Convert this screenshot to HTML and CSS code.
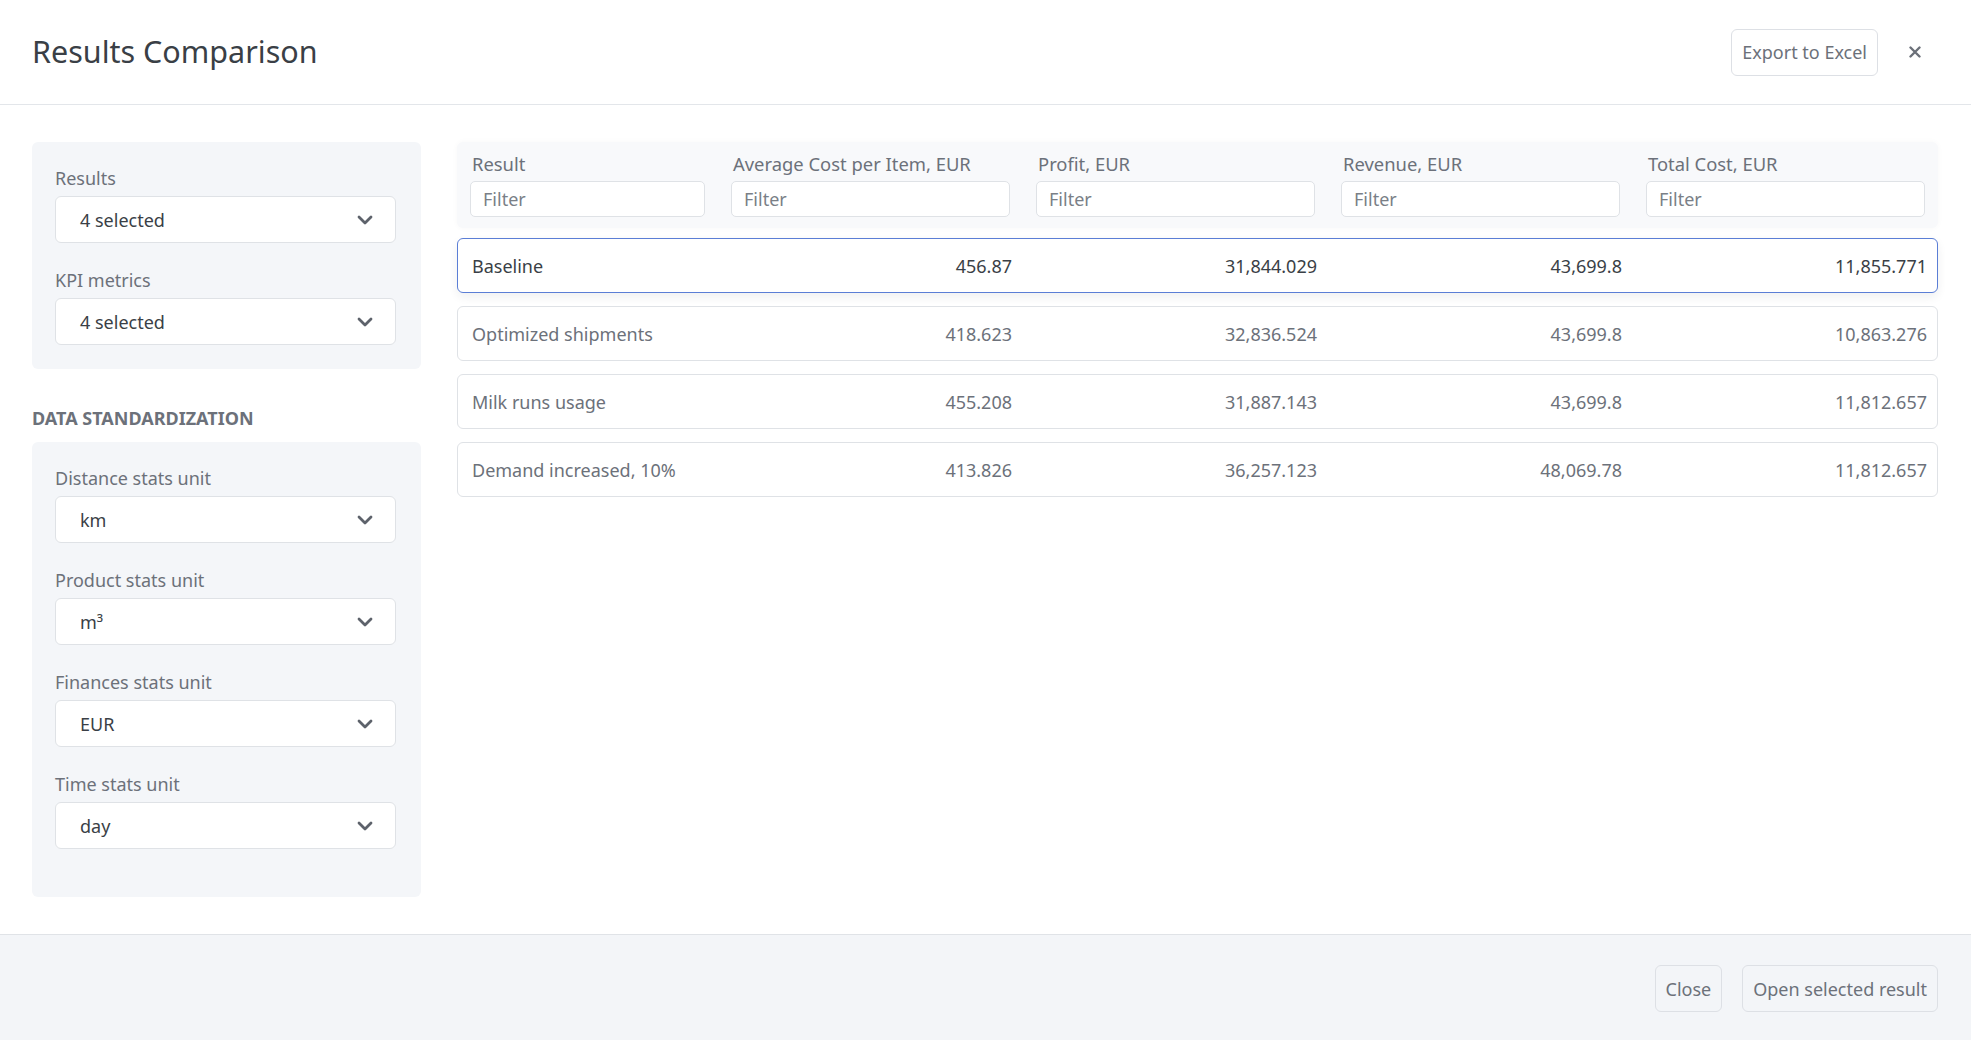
FILE: index.html
```html
<!DOCTYPE html>
<html lang="en">
<head>
<meta charset="utf-8">
<title>Results Comparison</title>
<link rel="stylesheet" href="styles.css">
</head>
<body>
<div class="modal">
  <header class="modal-header">
    <h1 class="title">Results Comparison</h1>
    <div class="header-actions">
      <button class="btn">Export to Excel</button>
      <button class="close-btn" aria-label="Close">
        <svg width="12" height="12" viewBox="0 0 12 12"><path d="M1.5 1.5 L10.5 10.5 M10.5 1.5 L1.5 10.5" stroke="#6b7079" stroke-width="2.4" stroke-linecap="round"/></svg>
      </button>
    </div>
  </header>

  <main class="modal-body">
    <aside class="sidebar">
      <section class="panel">
        <div class="field">
          <label class="field-label">Results</label>
          <div class="select"><span>4 selected</span><svg class="chev" width="16" height="10" viewBox="0 0 16 10"><path d="M2 2 L8 8 L14 2" fill="none" stroke="#5d626b" stroke-width="2.8" stroke-linecap="round" stroke-linejoin="round"/></svg></div>
        </div>
        <div class="field">
          <label class="field-label">KPI metrics</label>
          <div class="select"><span>4 selected</span><svg class="chev" width="16" height="10" viewBox="0 0 16 10"><path d="M2 2 L8 8 L14 2" fill="none" stroke="#5d626b" stroke-width="2.8" stroke-linecap="round" stroke-linejoin="round"/></svg></div>
        </div>
      </section>

      <h2 class="section-title">DATA STANDARDIZATION</h2>

      <section class="panel panel-tall">
        <div class="field">
          <label class="field-label">Distance stats unit</label>
          <div class="select"><span>km</span><svg class="chev" width="16" height="10" viewBox="0 0 16 10"><path d="M2 2 L8 8 L14 2" fill="none" stroke="#5d626b" stroke-width="2.8" stroke-linecap="round" stroke-linejoin="round"/></svg></div>
        </div>
        <div class="field">
          <label class="field-label">Product stats unit</label>
          <div class="select"><span>m³</span><svg class="chev" width="16" height="10" viewBox="0 0 16 10"><path d="M2 2 L8 8 L14 2" fill="none" stroke="#5d626b" stroke-width="2.8" stroke-linecap="round" stroke-linejoin="round"/></svg></div>
        </div>
        <div class="field">
          <label class="field-label">Finances stats unit</label>
          <div class="select"><span>EUR</span><svg class="chev" width="16" height="10" viewBox="0 0 16 10"><path d="M2 2 L8 8 L14 2" fill="none" stroke="#5d626b" stroke-width="2.8" stroke-linecap="round" stroke-linejoin="round"/></svg></div>
        </div>
        <div class="field">
          <label class="field-label">Time stats unit</label>
          <div class="select"><span>day</span><svg class="chev" width="16" height="10" viewBox="0 0 16 10"><path d="M2 2 L8 8 L14 2" fill="none" stroke="#5d626b" stroke-width="2.8" stroke-linecap="round" stroke-linejoin="round"/></svg></div>
        </div>
      </section>
    </aside>

    <section class="results">
      <div class="table-head grid">
        <div class="col-head"><span class="col-title">Result</span><input class="filter" placeholder="Filter"></div>
        <div class="col-head"><span class="col-title">Average Cost per Item, EUR</span><input class="filter" placeholder="Filter"></div>
        <div class="col-head"><span class="col-title">Profit, EUR</span><input class="filter" placeholder="Filter"></div>
        <div class="col-head"><span class="col-title">Revenue, EUR</span><input class="filter" placeholder="Filter"></div>
        <div class="col-head"><span class="col-title">Total Cost, EUR</span><input class="filter" placeholder="Filter"></div>
      </div>

      <div class="rows">
        <div class="row grid selected">
          <span>Baseline</span><span class="num">456.87</span><span class="num">31,844.029</span><span class="num">43,699.8</span><span class="num">11,855.771</span>
        </div>
        <div class="row grid">
          <span>Optimized shipments</span><span class="num">418.623</span><span class="num">32,836.524</span><span class="num">43,699.8</span><span class="num">10,863.276</span>
        </div>
        <div class="row grid">
          <span>Milk runs usage</span><span class="num">455.208</span><span class="num">31,887.143</span><span class="num">43,699.8</span><span class="num">11,812.657</span>
        </div>
        <div class="row grid">
          <span>Demand increased, 10%</span><span class="num">413.826</span><span class="num">36,257.123</span><span class="num">48,069.78</span><span class="num">11,812.657</span>
        </div>
      </div>
    </section>
  </main>

  <footer class="modal-footer">
    <button class="btn btn-footer">Close</button>
    <button class="btn btn-footer">Open selected result</button>
  </footer>
</div>
</body>
</html>
```

FILE: styles.css
```css
* { box-sizing: border-box; }

html, body {
  margin: 0;
  padding: 0;
  background: #ffffff;
}

body {
  font-family: "Noto Sans", "Open Sans", sans-serif;
  color: #3a3f46;
}

.modal {
  width: 1971px;
  height: 1040px;
  display: flex;
  flex-direction: column;
}

/* Header */
.modal-header {
  height: 105px;
  flex: 0 0 105px;
  border-bottom: 1px solid #e3e6ea;
  display: flex;
  align-items: center;
  justify-content: space-between;
  padding: 0 36px 3px 32px;
}

.title {
  margin: 0;
  font-size: 30.5px;
  font-weight: 400;
  color: #3a3f46;
}

.header-actions {
  display: flex;
  align-items: center;
  gap: 17px;
  padding-top: 3px;
}

.btn {
  font-family: "Noto Sans", "Open Sans", sans-serif;
  font-size: 18px;
  color: #6c717a;
  background: #ffffff;
  border: 1px solid #dde0e5;
  border-radius: 6px;
  height: 47px;
  padding: 0 10px;
  line-height: 1;
}

.close-btn {
  width: 40px;
  height: 40px;
  border: none;
  background: transparent;
  display: flex;
  align-items: center;
  justify-content: center;
  padding: 0;
}

/* Body */
.modal-body {
  flex: 1 1 auto;
  display: flex;
  gap: 36px;
  padding: 37px 33px 0 32px;
}

.sidebar {
  width: 389px;
  flex: 0 0 389px;
  display: flex;
  flex-direction: column;
}

.panel {
  background: #f4f6f9;
  border-radius: 6px;
  padding: 24px 25px 24px 23px;
  display: flex;
  flex-direction: column;
  gap: 25px;
}

.panel-tall {
  padding-bottom: 48px;
}

.field {
  display: flex;
  flex-direction: column;
}

.field-label {
  font-size: 18px;
  line-height: 24px;
  color: #6c717a;
  margin-bottom: 6px;
}

.select {
  height: 47px;
  background: #ffffff;
  border: 1px solid #dfe2e6;
  border-radius: 6px;
  display: flex;
  align-items: center;
  justify-content: space-between;
  padding: 0 22px 0 24px;
  font-size: 18px;
  color: #3a3f46;
}

.chev { display: block; }

.section-title {
  margin: 37px 0 12px 0;
  font-size: 18px;
  line-height: 24px;
  font-weight: 700;
  color: #6c717a;
}

/* Results table */
.results {
  flex: 1 1 auto;
  display: flex;
  flex-direction: column;
}

.grid {
  display: grid;
  grid-template-columns: 235px repeat(4, 1fr);
  column-gap: 26px;
}

.table-head {
  background: #f8f9fb;
  border-radius: 6px;
  padding: 10px 13px 11px 13px;
  box-shadow: 0 0 6px rgba(30, 40, 60, 0.03);
}

.col-head {
  display: flex;
  flex-direction: column;
}

.col-title {
  font-size: 18.4px;
  line-height: 24px;
  color: #6c717a;
  padding-left: 2px;
  margin-bottom: 5px;
  white-space: nowrap;
}

.filter {
  height: 36px;
  width: 100%;
  border: 1px solid #dfe2e6;
  border-radius: 5px;
  background: #ffffff;
  padding: 0 12px;
  font-family: "Noto Sans", "Open Sans", sans-serif;
  font-size: 18px;
  color: #3a3f46;
  outline: none;
}

.filter::placeholder {
  color: #7a7f87;
}

.rows {
  display: flex;
  flex-direction: column;
  gap: 13px;
  margin-top: 10px;
}

.row {
  height: 55px;
  border: 1px solid #dfe2e6;
  border-radius: 6px;
  background: #ffffff;
  padding: 0 10px 0 14px;
  align-items: center;
  font-size: 18px;
  color: #6c717a;
}

.row.selected {
  border-color: #5b7ed6;
  color: #3a3f46;
  box-shadow: 0 4px 10px rgba(30, 40, 60, 0.07);
}

.num {
  text-align: right;
}

/* Footer */
.modal-footer {
  height: 106px;
  flex: 0 0 106px;
  border-top: 1px solid #e0e3e7;
  background: #f3f5f8;
  display: flex;
  align-items: center;
  justify-content: flex-end;
  gap: 20px;
  padding: 2px 33px 0 0;
}

.btn-footer {
  background: #f3f5f8;
}
```
